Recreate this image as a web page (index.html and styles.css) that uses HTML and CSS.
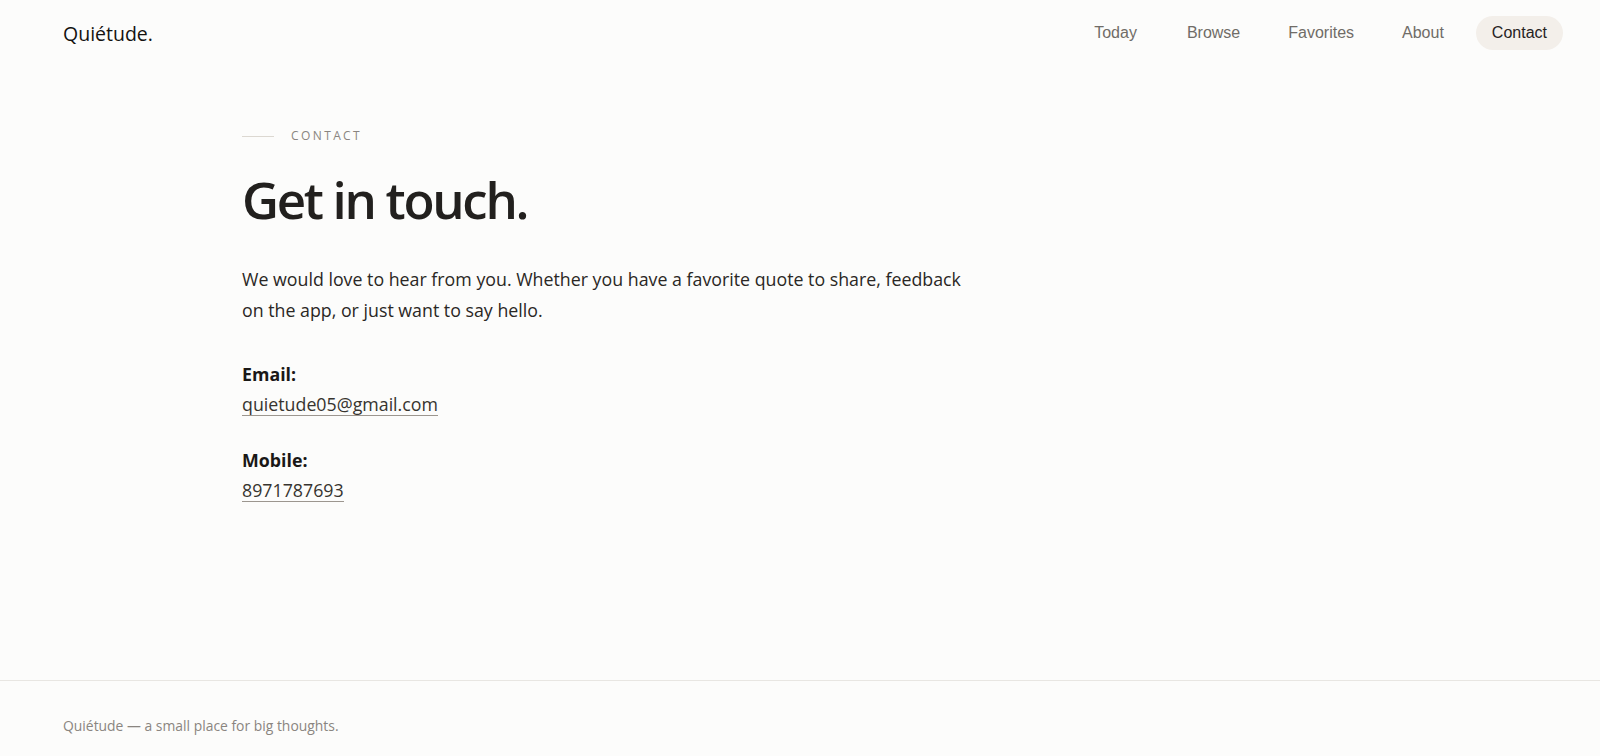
FILE: index.html
```html
<!DOCTYPE html>
<html lang="en">
<head>
<meta charset="utf-8">
<title>Contact — Quiétude.</title>
<link rel="stylesheet" href="styles.css">
</head>
<body>
  <header class="site-header">
    <a class="logo" href="#">Quiétude.</a>
    <nav class="nav">
      <a class="nav-link" href="#">Today</a>
      <a class="nav-link" href="#">Browse</a>
      <a class="nav-link" href="#">Favorites</a>
      <a class="nav-link" href="#">About</a>
      <a class="nav-link is-active" href="#">Contact</a>
    </nav>
  </header>

  <main class="main">
    <section class="contact">
      <div class="eyebrow">
        <span class="eyebrow-line"></span>
        <span class="eyebrow-text">Contact</span>
      </div>
      <h1 class="title">Get in touch.</h1>
      <p class="lead">We would love to hear from you. Whether you have a favorite quote to share, feedback on the app, or just want to say hello.</p>

      <div class="contact-item">
        <span class="contact-label">Email:</span>
        <a class="contact-link" href="#">quietude05@gmail.com</a>
      </div>
      <div class="contact-item">
        <span class="contact-label">Mobile:</span>
        <a class="contact-link" href="#">8971787693</a>
      </div>
    </section>
  </main>

  <footer class="site-footer">
    <p class="footer-text">Quiétude — a small place for big thoughts.</p>
  </footer>
</body>
</html>
```

FILE: styles.css
```css
* {
  box-sizing: border-box;
}

html, body {
  margin: 0;
  padding: 0;
}

body {
  background: #fcfcfb;
  color: #2b2926;
  font-family: "Open Sans", "Noto Sans", sans-serif;
  min-height: 100vh;
  display: flex;
  flex-direction: column;
}

a {
  color: inherit;
  text-decoration: none;
}

/* Header */
.site-header {
  display: flex;
  align-items: center;
  justify-content: space-between;
  padding: 16px 37px 16px 63px;
}

.logo {
  font-size: 19.5px;
  font-weight: 500;
  line-height: 1;
  color: #141210;
  position: relative;
  top: 1px;
}

.nav {
  display: flex;
  align-items: center;
  gap: 16px;
}

.nav-link {
  font-family: "Liberation Sans", Arial, sans-serif;
  font-size: 16px;
  line-height: normal;
  color: #706c67;
  padding: 8px 16px;
  border-radius: 999px;
}

.nav-link:first-child {
  padding-right: 18px;
}

.nav-link.is-active {
  background: #f3efea;
  color: #26231f;
}

/* Main */
.main {
  flex: 1;
  padding-top: 62px;
}

.contact {
  max-width: 1116px;
  margin: 0 auto;
}

.eyebrow {
  display: flex;
  align-items: center;
  gap: 17px;
  line-height: 16px;
}

.eyebrow-line {
  width: 32px;
  height: 1px;
  background: #dcd8d1;
}

.eyebrow-text {
  font-size: 12px;
  letter-spacing: 0.2em;
  text-transform: uppercase;
  color: #8a8580;
}

.title {
  margin: 27px 0 0;
  font-size: 51px;
  font-weight: 600;
  line-height: 1.1;
  letter-spacing: -2.3px;
  color: #22201e;
}

.lead {
  margin: 37px 0 0;
  max-width: 732px;
  font-size: 17.8px;
  line-height: 31px;
  color: #2a2724;
}

.contact-item {
  display: flex;
  flex-direction: column;
  align-items: flex-start;
  margin-top: 33px;
}

.contact-item + .contact-item {
  margin-top: 29px;
}

.contact-label {
  font-size: 17.8px;
  font-weight: 700;
  line-height: 30px;
  color: #1a1816;
}

.contact-link {
  margin-top: 4px;
  font-size: 17.8px;
  line-height: 22px;
  color: #37342f;
  border-bottom: 1px solid #9c968f;
}

/* Footer */
.site-footer {
  border-top: 1px solid #e8e6e2;
  padding: 35px 63px 20px;
}

.footer-text {
  margin: 0;
  font-size: 13.9px;
  line-height: 20px;
  color: #8a8580;
}
```
